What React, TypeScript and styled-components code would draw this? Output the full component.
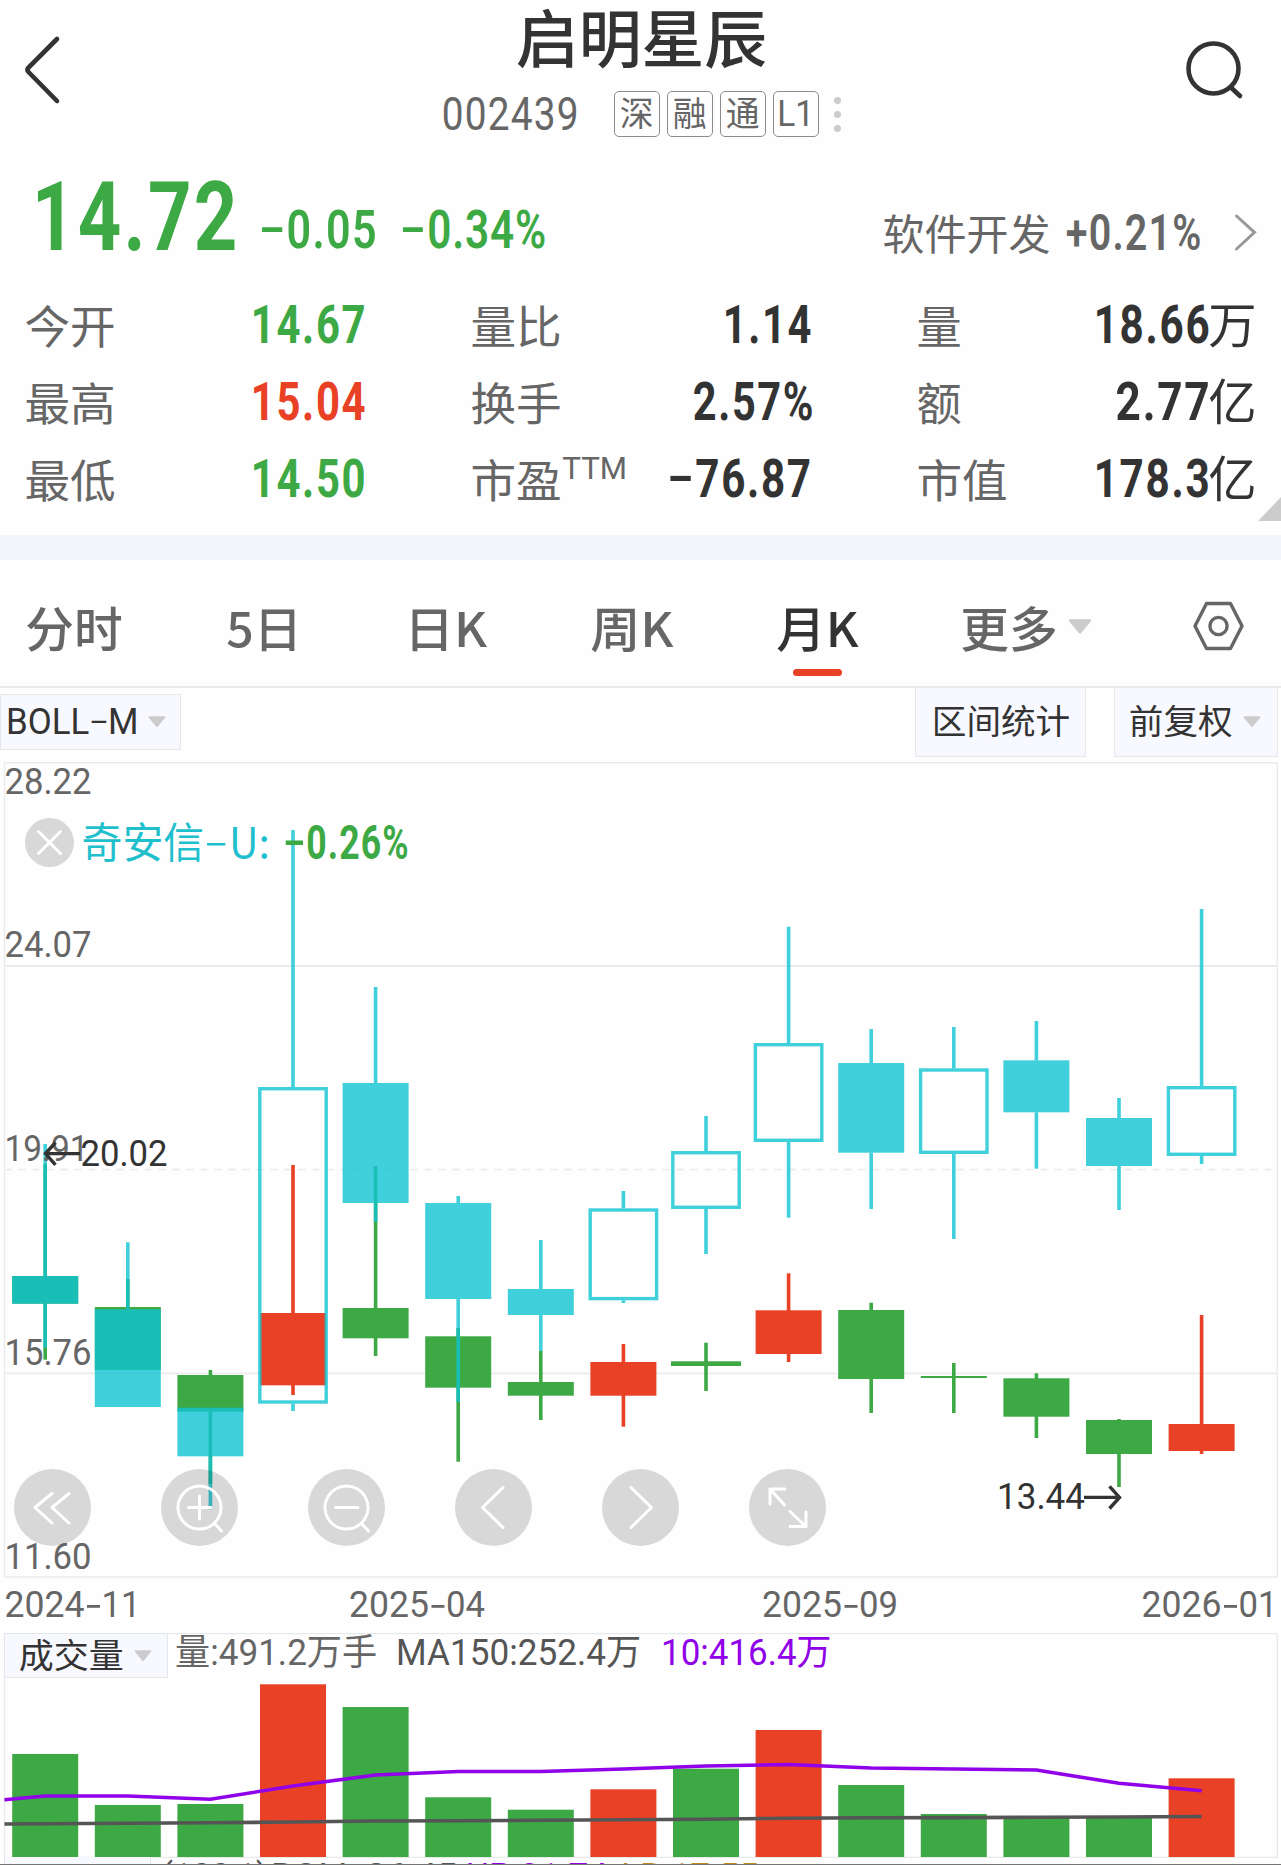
import React, { useLayoutEffect, useRef, useState } from "react";
import styled, { createGlobalStyle } from "styled-components";

const GREEN = "#3da945";
const RED = "#e84125";
const INK = "#333333";
const GRAY = "#666666";
const CYAN = "rgba(16, 196, 210, 0.8)";
const LATIN = 'Roboto, "Noto Sans CJK SC", sans-serif';
const HAN = '"Noto Sans CJK SC", sans-serif';

const Global = createGlobalStyle`
  * { box-sizing: border-box; }
  html, body { margin: 0; padding: 0; background: #fefefe; }
  body { font-family: ${LATIN}; }
`;

const Screen = styled.main`
  width: 1281px;
  height: 1866px;
  overflow: hidden;
  display: flex;
  flex-direction: column;
  background: #fefefe;
`;

/* ---------- condensed text ---------- */

const FitBox = styled.span<{ $w: number; $size: number; $weight: number; $color: string; $han?: boolean; $ml?: number; $dy?: number; $track: number }>`
  display: block;
  flex: none;
  width: ${(p) => p.$w}px;
  height: ${(p) => p.$size}px;
  line-height: ${(p) => p.$size}px;
  margin-left: ${(p) => p.$ml ?? 0}px;
  margin-top: ${(p) => (p.$dy ?? 0) * 2}px;
  font-family: ${(p) => (p.$han ? HAN : LATIN)};
  font-size: ${(p) => p.$size}px;
  font-weight: ${(p) => p.$weight};
  letter-spacing: ${(p) => p.$track}px;
  color: ${(p) => p.$color};
  white-space: nowrap;
`;
const FitInner = styled.span`
  display: inline-block;
  height: 100%;
  white-space: pre;
  transform-origin: 0 50%;
`;
const Dash = styled.span`
  display: inline-block;
  letter-spacing: 0;
  margin: 0 0.14em 0 0.12em;
  transform: translateY(-0.03em) scale(1.75, 0.85);
`;

type FitProps = {
  text: string;
  w: number;
  size: number;
  weight?: number;
  color?: string;
  han?: boolean;
  ml?: number;
  dy?: number;
  track?: number;
};

function Fit({ text, w, size, weight = 400, color = GRAY, han, ml, dy, track = 0 }: FitProps) {
  const ref = useRef<HTMLSpanElement>(null);
  const [scale, setScale] = useState(1);
  const bearing = (han ? 0.035 : 0.055) * size;
  const tracking = track * size;
  useLayoutEffect(() => {
    if (ref.current) setScale(w / (ref.current.offsetWidth - 2 * bearing - tracking));
  }, [w, text, bearing, tracking]);
  const parts = text.split("-");
  return (
    <FitBox $w={w} $size={size} $weight={weight} $color={color} $han={han} $ml={ml} $dy={dy} $track={tracking}>
      <FitInner ref={ref} style={{ transform: `translateX(${-bearing * scale}px) scaleX(${scale})` }}>
        {parts.map((part, i) => (
          <React.Fragment key={i}>
            {i > 0 && <Dash>-</Dash>}
            {part}
          </React.Fragment>
        ))}
      </FitInner>
    </FitBox>
  );
}

/* ---------- header ---------- */

const Header = styled.header`
  height: 160px;
  display: grid;
  grid-template-columns: 444px 1fr 120px;
`;
const BackIcon = styled.svg`
  width: 42px;
  height: 76px;
  margin: 32px 0 0 20px;
`;
const SearchIcon = styled.svg`
  width: 64px;
  height: 64px;
  margin: 38px 0 0 22px;
`;
const Heading = styled.div`
  display: flex;
  flex-direction: column;
`;
const TitleLine = styled.div`
  height: 77px;
  padding: 3px 0 0 74px;
`;
const CodeLine = styled.div`
  height: 74px;
  display: flex;
  align-items: center;
`;
const Tags = styled.div`
  display: flex;
  gap: 7.4px;
  margin-left: 38px;
`;
const Tag = styled.span`
  width: 45.6px;
  height: 46px;
  border: 1px solid #8c8c8c;
  border-radius: 5px;
  display: flex;
  align-items: center;
  justify-content: center;
`;
const Dots = styled.div`
  margin-left: 15px;
  display: flex;
  flex-direction: column;
  gap: 7px;
`;
const Dot = styled.i`
  width: 7px;
  height: 7px;
  border-radius: 50%;
  background: #cccccc;
`;

/* ---------- price ---------- */

const PriceRow = styled.section`
  height: 126px;
  padding-left: 36px;
  display: flex;
  align-items: flex-start;
`;
const Chevron = styled.svg`
  width: 24px;
  height: 40px;
  margin: 52px 0 0 35px;
`;

/* ---------- stats ---------- */

const Stats = styled.section`
  position: relative;
  height: 249px;
  display: grid;
  grid-template-columns: 446px 446px 389px;
  grid-template-rows: repeat(3, 77px);
`;
const Stat = styled.div<{ $right: number }>`
  display: flex;
  justify-content: space-between;
  align-items: center;
  padding: 0 ${(p) => p.$right}px 0 26px;
`;
const Group = styled.div`
  display: flex;
  align-items: center;
`;
const Corner = styled.i`
  position: absolute;
  right: 0;
  bottom: 14px;
  border-left: 23px solid transparent;
  border-bottom: 24px solid #cccccc;
`;
const Band = styled.div`
  height: 25px;
  flex: none;
  background: #f4f5fa;
`;

/* ---------- tabs ---------- */

const Tabs = styled.nav`
  height: 128px;
  flex: none;
  display: flex;
  padding-top: 42px;
  border-bottom: 2px solid #e9eaec;
`;
const Tab = styled.div<{ $ml: number; $active?: boolean }>`
  position: relative;
  height: 84px;
  margin-left: ${(p) => p.$ml}px;
  display: flex;
  align-items: flex-start;
  ${(p) =>
    p.$active &&
    `&::after {
      content: "";
      position: absolute;
      left: 15px;
      top: 67px;
      width: 49px;
      height: 7px;
      border-radius: 3.5px;
      background: ${RED};
    }`}
`;
const Caret = styled.svg<{ $w: number; $ml: number; $mt?: number }>`
  width: ${(p) => p.$w}px;
  height: ${(p) => p.$w * 0.62}px;
  flex: none;
  margin-left: ${(p) => p.$ml}px;
  margin-top: ${(p) => p.$mt ?? 0}px;
`;
const Hex = styled.svg`
  width: 54px;
  height: 54px;
  margin-left: 100px;
  margin-top: -3px;
`;

/* ---------- toolbar ---------- */

const Toolbar = styled.div`
  height: 74px;
  flex: none;
  display: flex;
  align-items: flex-start;
`;
const Picker = styled.div<{ $w: number; $h: number; $pl: number; $ml?: number; $mt?: number; $flat?: boolean }>`
  width: ${(p) => p.$w}px;
  height: ${(p) => p.$h}px;
  margin-left: ${(p) => p.$ml ?? 0}px;
  margin-top: ${(p) => p.$mt ?? 0}px;
  padding-left: ${(p) => p.$pl}px;
  display: flex;
  align-items: center;
  flex: none;
  background: #f8f9fe;
  border: 1px solid #e6e7eb;
  ${(p) => (p.$flat ? "border-top: 0;" : "")}
`;

/* ---------- charts ---------- */

const ChartArea = styled.section`
  position: relative;
  height: 871px;
  flex: none;
`;
const Drawing = styled.svg`
  display: block;
  width: 1281px;
  font-family: ${LATIN};
`;
const Legend = styled.div`
  position: absolute;
  left: 25px;
  top: 56px;
  height: 49px;
  display: flex;
  align-items: center;
`;
const Controls = styled.div`
  position: absolute;
  left: 14px;
  top: 707px;
  display: flex;
  gap: 70px;
`;
const Round = styled.button<{ $d: number }>`
  width: ${(p) => p.$d}px;
  height: ${(p) => p.$d}px;
  border: 0;
  padding: 0;
  border-radius: 50%;
  background: rgba(0, 0, 0, 0.15);
  svg {
    display: block;
    width: 100%;
    height: 100%;
    fill: none;
    stroke: #ffffff;
    stroke-width: 3;
    stroke-linecap: round;
    stroke-linejoin: round;
  }
`;
const VolumeArea = styled.section`
  height: 224px;
  flex: none;
  display: grid;
`;
const VolumeHead = styled.div`
  grid-area: 1 / 1;
  height: 45px;
  display: flex;
  align-items: center;
  padding-left: 4px;
  z-index: 1;
`;
const VolumeDrawing = styled(Drawing)`
  grid-area: 1 / 1;
`;
const BollRow = styled.section`
  position: relative;
  height: 8px;
  flex: none;
  overflow: hidden;
  display: flex;
  align-items: flex-start;
  border-bottom: 1px solid #777777;
`;
const BollPicker = styled.div`
  width: 147px;
  height: 45px;
  margin-left: 4px;
  padding: 4px 0 0 16px;
  flex: none;
  background: #f8f9fe;
  border: 1px solid #e6e7eb;
  border-top: 0;
`;

const cx = (i: number) => 45.2 + 82.6 * i;
const BAR = 66;

/* high, body top, body bottom, low, hollow */
type Candle = [number, number, number, number, boolean];
const peer: Candle[] = [
  [1144, 1276, 1303.7, 1347.7, false],
  [1242.3, 1309.3, 1407, 1407, false],
  [1407.7, 1407.7, 1456.3, 1509.3, false],
  [830, 1087, 1403.7, 1411, true],
  [987, 1083, 1203, 1222, false],
  [1196, 1203, 1299, 1402, false],
  [1240, 1289, 1315, 1351, false],
  [1191, 1208.3, 1300.3, 1303, true],
  [1116, 1151, 1209, 1254, true],
  [926.7, 1043, 1142, 1217.7, true],
  [1029, 1063, 1152.7, 1209, false],
  [1027, 1068.3, 1154, 1239, true],
  [1021, 1060.3, 1112.3, 1168.7, false],
  [1098, 1118, 1166, 1210, false],
  [909, 1086, 1156, 1164, true],
];
/* high, body top, body bottom, low, rising */
const own: Candle[] = [
  [1164, 1276, 1303.7, 1359.7, false],
  [1279, 1307, 1370, 1370, false],
  [1370, 1375, 1411.7, 1484, false],
  [1165, 1313, 1385.3, 1395, true],
  [1166, 1308, 1338.3, 1356, false],
  [1328, 1336.3, 1387.7, 1461.7, false],
  [1351, 1382, 1395.7, 1420, false],
  [1344, 1362, 1395.7, 1426.7, true],
  [1342.7, 1361.3, 1366, 1391, false],
  [1273.3, 1310.3, 1354, 1362, true],
  [1302.7, 1310, 1379, 1413, false],
  [1363, 1376, 1378, 1413, false],
  [1373.3, 1378.3, 1416.7, 1438, false],
  [1419, 1420, 1454, 1487, false],
  [1315, 1424, 1451, 1454, true],
];
const volumes: [number, boolean][] = [
  [1754, false], [1805, false], [1804, false], [1684.3, true], [1707, false],
  [1797.3, false], [1809.7, false], [1789.3, true], [1768.7, false], [1730, true],
  [1785, false], [1814, false], [1816, false], [1817, false], [1778.3, true],
];
const ma10 = [1796, 1796, 1799.3, 1786, 1775, 1771.5, 1771.5, 1769, 1766, 1764.5, 1768, 1769, 1770, 1783.3, 1790.7];
const ma150 = [1823.7, 1823.3, 1822.8, 1822, 1821, 1820.7, 1820.3, 1819.7, 1819.2, 1818.2, 1817.8, 1817.6, 1817.3, 1817, 1816.5];
const line = (start: number, values: number[]) => `4.5,${start} ` + values.map((v, i) => `${cx(i)},${v}`).join(" ");

function AxisText({ x, y, w, children, color = GRAY }: { x: number; y: number; w: number; children: string; color?: string }) {
  return (
    <text x={x - 1} y={y} fontSize={36.5} fill={color} textLength={w + 2} lengthAdjust="spacingAndGlyphs">
      {children}
    </text>
  );
}

function DateText({ x, children }: { x: number; children: string }) {
  const [year, month] = children.split("-");
  return (
    <g>
      <AxisText x={x} y={1617} w={78}>{year}</AxisText>
      <rect x={x + 81.5} y={1605} width={13} height={2.8} fill={GRAY} />
      <AxisText x={x + 97} y={1617} w={37}>{month}</AxisText>
    </g>
  );
}

function PriceChart() {
  return (
    <Drawing viewBox="0 762 1281 871" height={871}>
      <g fill="none" stroke="#ebebed" strokeWidth={1.4}>
        <path d="M4.5 1577V762.7H1277.3V1577Z" />
        <path d="M4.5 966H1277M4.5 1373.3H1277" strokeWidth={1.8} />
        <path d="M4.5 1169.7H1277" strokeDasharray="7 7" strokeWidth={1.8} />
      </g>
      {own.map(([h, t, b, l, up], i) => (
        <g key={i} fill={up ? RED : GREEN}>
          <rect x={cx(i) - 1.8} y={h} width={3.6} height={l - h} />
          <rect x={cx(i) - (i === 8 ? 35 : 33)} y={t} width={i === 8 ? 70 : BAR} height={b - t} />
        </g>
      ))}
      {peer.map(([h, t, b, l, hollow], i) => (
        <g key={i} fill={CYAN}>
          {t > h && <rect x={cx(i) - 1.8} y={h} width={3.6} height={t - h} />}
          {l > b && <rect x={cx(i) - 1.8} y={b} width={3.6} height={l - b} />}
          {hollow ? (
            <rect x={cx(i) - 33.2} y={t + 1.7} width={66.4} height={b - t - 3.4} fill="none" stroke={CYAN} strokeWidth={3.4} />
          ) : (
            <rect x={cx(i) - 33} y={t} width={BAR} height={b - t} />
          )}
        </g>
      ))}
      <AxisText x={5.5} y={794} w={85}>28.22</AxisText>
      <AxisText x={5.5} y={957} w={85}>24.07</AxisText>
      <AxisText x={5.5} y={1161} w={82}>19.91</AxisText>
      <AxisText x={5.5} y={1365} w={85}>15.76</AxisText>
      <AxisText x={5.5} y={1568.5} w={85}>11.60</AxisText>
      <AxisText x={81.5} y={1165.6} w={85} color={INK}>20.02</AxisText>
      <AxisText x={998} y={1509} w={86} color={INK}>13.44</AxisText>
      <g fill="none" stroke={INK} strokeWidth={3.4}>
        <path d="M80 1153.6H46M55.5 1142.5L45.5 1153.6L55.5 1164.8" />
        <path d="M1084 1497.4H1119M1109.5 1486.3L1119.5 1497.4L1109.5 1508.5" />
      </g>
      <DateText x={5.5}>2024-11</DateText>
      <DateText x={350}>2025-04</DateText>
      <DateText x={763}>2025-09</DateText>
      <DateText x={1142.5}>2026-01</DateText>
    </Drawing>
  );
}

function VolumeChart() {
  return (
    <VolumeDrawing viewBox="0 1633 1281 225" height={225}>
      <path d="M4.5 1858V1633.7H1277.3V1858M4.5 1857.5H1277" fill="none" stroke="#e8e9eb" strokeWidth={1.3} />
      {volumes.map(([top, up], i) => (
        <rect key={i} x={cx(i) - 33} y={top} width={BAR} height={1857 - top} fill={up ? RED : GREEN} />
      ))}
      <polyline points={line(1799.7, ma10)} fill="none" stroke="#9000e8" strokeWidth={3.6} />
      <polyline points={line(1824, ma150)} fill="none" stroke="#555555" strokeWidth={3.6} />
    </VolumeDrawing>
  );
}

function Down({ w, ml, mt }: { w: number; ml: number; mt?: number }) {
  return (
    <Caret $w={w} $ml={ml} $mt={mt} viewBox="0 0 24 15">
      <path d="M2 1.5H22L12 13.5Z" fill="#cccccc" stroke="#cccccc" strokeWidth={2.5} strokeLinejoin="round" />
    </Caret>
  );
}

const controlIcons = [
  "M38 24.5L21 38.5L38 54M55 24.5L38 38.5L55 54",
  "M38.5 17a21.5 21.5 0 1 0 .01 0M53.5 54.5L60.5 62M27.5 38.5H50M38.5 27V50",
  "M38.5 17a21.5 21.5 0 1 0 .01 0M53.5 54.5L60.5 62M27.5 38.5H50",
  "M48 18.5L27.5 38.5L48 58.5",
  "M29 18.5L49.5 38.5L29 58.5",
  "M36 20H21V35M21 20L35.5 36M41 42.5L57 57.5M57 43V57.5H41",
];

const stats: { label: FitProps; sup?: boolean; value: FitProps; unit?: string; right: number }[] = [
  { label: { text: "今开", w: 88, size: 45 }, value: { text: "14.67", w: 110, size: 54, color: GREEN }, right: 83 },
  { label: { text: "量比", w: 88, size: 45 }, value: { text: "1.14", w: 84, size: 54, color: INK }, right: 83 },
  { label: { text: "量", w: 42, size: 45 }, value: { text: "18.66", w: 111, size: 54, color: INK }, unit: "万", right: 26 },
  { label: { text: "最高", w: 88, size: 45 }, value: { text: "15.04", w: 110, size: 54, color: RED }, right: 83 },
  { label: { text: "换手", w: 88, size: 45 }, value: { text: "2.57%", w: 116, size: 54, color: INK }, right: 81 },
  { label: { text: "额", w: 42, size: 45 }, value: { text: "2.77", w: 89, size: 54, color: INK }, unit: "亿", right: 26 },
  { label: { text: "最低", w: 88, size: 45 }, value: { text: "14.50", w: 110, size: 54, color: GREEN }, right: 83 },
  { label: { text: "市盈", w: 88, size: 45 }, sup: true, value: { text: "-76.87", w: 139, size: 54, color: INK }, right: 83 },
  { label: { text: "市值", w: 88, size: 45 }, value: { text: "178.3", w: 111, size: 54, color: INK }, unit: "亿", right: 26 },
];

export default function App() {
  return (
    <Screen>
      <Global />
      <Header>
        <BackIcon viewBox="0 0 42 76">
          <path d="M37 7L8.5 35.5Q6.5 37.7 8.5 40L37 69" fill="none" stroke={INK} strokeWidth={4.6} strokeLinecap="round" />
        </BackIcon>
        <Heading>
          <TitleLine>
            <Fit text="启明星辰" w={247} size={63} weight={500} color={INK} han />
          </TitleLine>
          <CodeLine>
            <Fit text="002439" w={132} size={46} track={0.03} />
            <Tags>
              <Tag><Fit text="深" w={32} size={34.5} han dy={-2.5} /></Tag>
              <Tag><Fit text="融" w={32} size={34.5} han dy={-2.5} /></Tag>
              <Tag><Fit text="通" w={32} size={34.5} han dy={-2.5} /></Tag>
              <Tag><Fit text="L1" w={33} size={36.5} /></Tag>
            </Tags>
            <Dots><Dot /><Dot /><Dot /></Dots>
          </CodeLine>
        </Heading>
        <SearchIcon viewBox="0 0 64 64">
          <g fill="none" stroke={INK} strokeWidth={4.6} strokeLinecap="round">
            <circle cx="30.5" cy="30.5" r="25" />
            <path d="M48 49.5L57 58" />
          </g>
        </SearchIcon>
      </Header>

      <PriceRow>
        <Fit text="14.72" w={197} size={97} weight={700} color={GREEN} dy={4.5} track={0.03} />
        <Fit text="-0.05" w={112} size={54} weight={600} color={GREEN} ml={29} dy={21.5} track={0.03} />
        <Fit text="-0.34%" w={141} size={54} weight={600} color={GREEN} ml={29} dy={21.5} track={0.02} />
        <Fit text="软件开发" w={165} size={42} han ml={340} dy={25.3} />
        <Fit text="+0.21%" w={131} size={50} weight={600} ml={19} dy={23.8} track={0.03} />
        <Chevron viewBox="0 0 24 40">
          <path d="M2.5 4L20.5 20.3L2.5 37" fill="none" stroke="#999999" strokeWidth={3} strokeLinecap="round" />
        </Chevron>
      </PriceRow>

      <Stats>
        {stats.map((s, i) => (
          <Stat key={i} $right={s.right}>
            <Group>
              <Fit {...s.label} han />
              {s.sup && <Fit text="TTM" w={61} size={32} weight={400} ml={4} dy={-10.5} />}
            </Group>
            <Group>
              <Fit {...s.value} weight={700} track={0.04} />
              {s.unit && <Fit text={s.unit} w={45} size={49} color={INK} han ml={3} dy={-3} />}
            </Group>
          </Stat>
        ))}
        <Corner />
      </Stats>
      <Band />

      <Tabs>
        <Tab $ml={27}><Fit text="分时" w={94} size={48} weight={500} han /></Tab>
        <Tab $ml={107}><Fit text="5日" w={72} size={48} weight={500} han /></Tab>
        <Tab $ml={106}><Fit text="日K" w={79.5} size={48} weight={500} han /></Tab>
        <Tab $ml={106.5}><Fit text="周K" w={80} size={48} weight={500} han /></Tab>
        <Tab $ml={106} $active><Fit text="月K" w={79} size={48} weight={500} color={INK} han /></Tab>
        <Tab $ml={105}>
          <Fit text="更多" w={94} size={48} weight={500} han />
          <Down w={24} ml={12} mt={17} />
        </Tab>
        <Hex viewBox="0 0 54 54">
          <g fill="none" stroke={GRAY} strokeWidth={3.4} strokeLinejoin="round">
            <path d="M14.5 4.5H38.5L50 27L38.5 49.5H14.5L3 27Z" />
            <circle cx="26.5" cy="27" r="8.6" />
          </g>
        </Hex>
      </Tabs>

      <Toolbar>
        <Picker $w={181} $h={56} $pl={7} $mt={6}>
          <Fit text="BOLL-M" w={129} size={36.5} color={INK} />
          <Down w={18} ml={11} />
        </Picker>
        <Picker $w={171} $h={69} $pl={17} $ml={734} $flat>
          <Fit text="区间统计" w={136} size={34.5} color={INK} han dy={-2.8} />
        </Picker>
        <Picker $w={164} $h={69} $pl={15} $ml={28} $flat>
          <Fit text="前复权" w={102} size={34.5} color={INK} han dy={-2.8} />
          <Down w={18} ml={11} />
        </Picker>
      </Toolbar>

      <ChartArea>
        <PriceChart />
        <Legend>
          <Round $d={49}>
            <svg viewBox="0 0 49 49"><path d="M13.5 13.5L35.5 35.5M35.5 13.5L13.5 35.5" /></svg>
          </Round>
          <Fit text="奇安信-U:" w={185} size={42} color="#1fbfcd" han ml={8.5} dy={-2.5} />
          <Fit text="-0.26%" w={122} size={48} weight={700} color={GREEN} ml={17.5} track={0.03} />
        </Legend>
        <Controls>
          {controlIcons.map((d, i) => (
            <Round key={i} $d={77}>
              <svg viewBox="0 0 77 77"><path d={d} /></svg>
            </Round>
          ))}
        </Controls>
      </ChartArea>

      <VolumeArea>
        <VolumeHead>
          <Picker $w={164} $h={45} $pl={14.5}>
            <Fit text="成交量" w={103} size={34.5} color={INK} han dy={-2.6} />
            <Down w={18} ml={11} />
          </Picker>
          <Fit text="量:491.2万手" w={198} size={36} ml={9} dy={-2.3} />
          <Fit text="MA150:252.4万" w={241} size={36} color="#555555" ml={23} dy={-2.3} />
          <Fit text="10:416.4万" w={167} size={36} color="#9000e8" ml={24} dy={-2.3} />
        </VolumeHead>
        <VolumeChart />
      </VolumeArea>

      <BollRow>
        <BollPicker><Fit text="BOLL" w={80} size={36} color={INK} /></BollPicker>
        <Fit text="(100,1)" w={103} size={36} color="#555555" ml={12} dy={0.8} />
        <Fit text="BOLL:26.45" w={182} size={36} color="#555555" ml={7} dy={0.8} />
        <Fit text="UP:31.74" w={138} size={36} color="#9000e8" ml={13} dy={0.8} />
        <Fit text="LB:17.55" w={134} size={36} color="#c08a1a" ml={17} dy={0.8} />
      </BollRow>
    </Screen>
  );
}
